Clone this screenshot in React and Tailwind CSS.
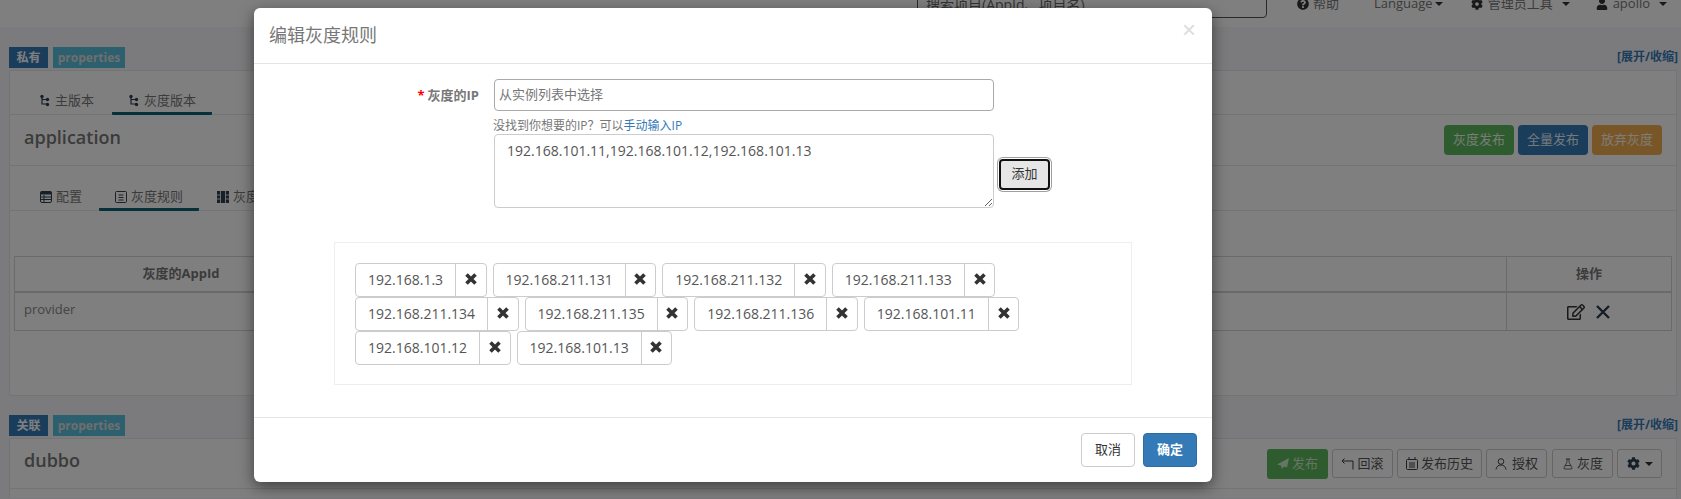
import { FaCog, FaQuestionCircle, FaUser, FaRegEdit } from "react-icons/fa";
import { FlaskConical } from "lucide-react";

const FONT = "font-['Open_Sans','Noto_Sans_CJK_SC',sans-serif]";

const ips = [
  "192.168.1.3",
  "192.168.211.131",
  "192.168.211.132",
  "192.168.211.133",
  "192.168.211.134",
  "192.168.211.135",
  "192.168.211.136",
  "192.168.101.11",
  "192.168.101.12",
  "192.168.101.13",
];

function Caret() {
  return <span className="inline-block ml-[2px] w-0 h-0 border-x-[4px] border-x-transparent border-t-[4px] border-t-[#333]" />;
}

function ForkIcon() {
  return (
    <svg width="12" height="13" viewBox="0 0 12 13" className="text-[#2f3f52]">
      <path d="M3 2v8h6M3 5.500h6" fill="none" stroke="currentColor" strokeWidth="1.200" />
      <circle cx="3" cy="2.500" r="1.700" fill="currentColor" />
      <circle cx="8.500" cy="5.500" r="1.700" fill="currentColor" />
      <circle cx="8.500" cy="10.500" r="1.700" fill="currentColor" />
    </svg>
  );
}

function TableIcon() {
  return (
    <svg width="12" height="12" viewBox="0 0 12 12" className="text-[#2f3f52]">
      <rect x="0.500" y="0.500" width="11" height="11" rx="1.500" fill="none" stroke="currentColor" />
      <rect x="0.500" y="0.500" width="11" height="3" fill="currentColor" />
      <path d="M1 6h10M1 8.500h10M4 4v7" stroke="currentColor" />
    </svg>
  );
}

function FileIcon() {
  return (
    <svg width="12" height="13" viewBox="0 0 12 13" className="text-[#3a3f47]">
      <rect x="0.500" y="1.500" width="11" height="11" rx="1" fill="none" stroke="currentColor" />
      <path d="M3.500 5h5M3.500 7.500h5M3.500 10h5M4 1.500h4" stroke="currentColor" />
    </svg>
  );
}

function GridIcon() {
  return (
    <svg width="12" height="12" viewBox="0 0 12 12" className="text-[#2f3f52]">
      <path d="M0 0h12v12H0z" fill="currentColor" />
      <path d="M3.500 0v12M8.500 0v12M0 4h3.500M8.500 4H12M0 8h3.500M8.500 8H12" stroke="#fff" strokeWidth="0.800" />
    </svg>
  );
}

function SendIcon() {
  return (
    <svg width="12" height="11" viewBox="0 0 12 11" className="text-white/70 mr-[3px]">
      <path d="M12 0 L0 6.500 L4 7.500 L5 11 L7 8.500 L10 9.500 Z" fill="currentColor" />
    </svg>
  );
}

function RollbackIcon() {
  return (
    <svg width="13" height="12" viewBox="0 0 13 12" className="text-[#2f3f52] mr-[3px]">
      <path d="M1 3h11v8.500M3.500 .5L1 3l2.500 2.500" fill="none" stroke="currentColor" />
    </svg>
  );
}

function CalendarIcon() {
  return (
    <svg width="12" height="13" viewBox="0 0 12 13" className="text-[#3a3f47] mr-[3px]">
      <rect x="0.500" y="2.500" width="11" height="10" rx="1" fill="none" stroke="currentColor" />
      <path d="M3 0v3M9 0v3M3 6h6M3 8h6M3 10h6" stroke="currentColor" />
    </svg>
  );
}

function UserIcon() {
  return (
    <svg width="12" height="12" viewBox="0 0 12 12" className="text-[#3a3f47] mr-[5px]">
      <circle cx="6" cy="3.500" r="2.800" fill="none" stroke="currentColor" />
      <path d="M1 11.500c.4-3 2.400-4.500 5-4.500s4.600 1.500 5 4.500" fill="none" stroke="currentColor" />
    </svg>
  );
}

function RemoveIcon() {
  return (
    <svg width="12" height="12" viewBox="0 0 12 12" className="text-[#333]">
      <path d="M1.500 1.500l9 9M10.500 1.500l-9 9" stroke="currentColor" strokeWidth="3.600" />
    </svg>
  );
}

function Badges({ scope }) {
  return (
    <div className="flex justify-between items-end h-[23px] -mr-[1px]">
      <div className="flex gap-[5px] h-[21px] mb-[2px] text-[12px] font-bold text-white leading-[21px]">
        <span className="w-[39px] text-center bg-[#337ab7]">{scope}</span>
        <span className="w-[72px] text-center bg-[#5bc0de] text-[#ddd]">properties</span>
      </div>
      <a className="text-[12px] font-bold text-[#337ab7] mb-[4px]">[展开/收缩]</a>
    </div>
  );
}

function Tab({ icon, label, active, className = "mr-[2px]" }) {
  return (
    <div
      className={`flex items-center gap-[4px] h-[28px] -mb-[1px] pt-[2px] px-[16px] text-[13px] text-[#777] border-b-[3px] ${className} ${
        active ? "border-[#0d6275] rounded-b-[1px]" : "border-transparent"
      }`}
    >
      {icon}
      <span>{label}</span>
    </div>
  );
}

function ActionBtn({ icon, label, className = "w-[61px]" }) {
  return (
    <button className={`flex items-center justify-center h-[29px] border border-[#ccc] rounded-[3px] bg-white text-[13px] text-[#555] ${className}`}>
      {icon}
      {label}
    </button>
  );
}

function Background() {
  return (
    <div className="w-full h-full bg-[#f7f7fa]">
      {/* navbar, cut off at the top of the window */}
      <div className="h-[27px] bg-white overflow-hidden">
        <div className="flex items-center h-[28px] -mt-[10px] text-[13px] text-[#777]">
          <div className="relative w-[350px] h-[28px] ml-[917px] border border-[#555] rounded-[4px] pl-[8px] leading-[27px] text-[14px] text-[#666]">
            搜索项目(AppId、项目名)
          </div>
          <span className="flex items-center gap-[4px] ml-[30px]"><FaQuestionCircle className="text-[12px] text-[#333]" />帮助</span>
          <span className="flex items-center ml-[35px]">Language<Caret /></span>
          <span className="flex items-center gap-[5px] ml-[28px]"><FaCog className="text-[12px] text-[#333]" />管理员工具<span className="ml-[2px] flex"><Caret /></span></span>
          <span className="flex items-center gap-[5px] ml-[26px]"><FaUser className="text-[12px] text-[#333]" />apollo<span className="ml-[2px] flex"><Caret /></span></span>
        </div>
      </div>

      <div className="pl-[9px] pr-[4px] pt-[20px]">
        <Badges scope="私有" />
        <div className="h-[326px] bg-white border border-[#e8e8e8]">
          <div className="flex items-end h-[44px] pl-[13px] border-b border-[#e8e8e8]">
            <Tab icon={<ForkIcon />} label="主版本" />
            <Tab icon={<ForkIcon />} label="灰度版本" active />
          </div>
          <div className="flex items-center justify-between h-[51px] pl-[14px] pr-[14px] border-b border-[#e8e8e8]">
            <h3 className="text-[18px] font-semibold text-[#777] -mt-[6px]">application</h3>
            <div className="flex gap-[4px] mt-[-1px]">
              <button className="w-[70px] h-[30px] bg-[#5cb85c] rounded-[4px] text-[13px] text-white/90">灰度发布</button>
              <button className="w-[70px] h-[30px] bg-[#337ab7] rounded-[4px] text-[13px] text-white/90">全量发布</button>
              <button className="w-[70px] h-[30px] bg-[#f0ad4e] rounded-[4px] text-[13px] text-white/90">放弃灰度</button>
            </div>
          </div>
          <div className="flex items-end h-[45px] pl-[14px] border-b border-[#e8e8e8]">
            <Tab icon={<TableIcon />} label="配置" className="mr-[1px]" />
            <Tab icon={<FileIcon />} label="灰度规则" active />
            <Tab icon={<GridIcon />} label="灰度实例列表" />
          </div>
          <div className="mx-[4px] mt-[45px] border border-[#d4d4d4] text-[13px] text-[#888]">
            <div className="grid grid-cols-[332px_1fr_165px] h-[36px] border-b-2 border-[#d4d4d4] font-bold text-[#777] items-center">
              <span className="text-center">灰度的AppId</span>
              <span />
              <span className="flex items-center justify-center h-full border-l border-[#d4d4d4]">操作</span>
            </div>
            <div className="grid grid-cols-[332px_1fr_165px] h-[37px] items-center">
              <span className="pl-[9px] pb-[3px]">provider</span>
              <span />
              <span className="flex items-center justify-center gap-[11px] h-full pr-[2px] border-l border-[#d4d4d4]">
                <FaRegEdit className="text-[18px] text-[#333]" />
                <svg width="14" height="14" viewBox="0 0 14 14" className="text-[#2c3a4a]">
                  <path d="M1 1l12 12M13 1L1 13" stroke="currentColor" strokeWidth="2.400" />
                </svg>
              </span>
            </div>
          </div>
        </div>
      </div>

      <div className="pl-[9px] pr-[4px] pt-[19px]">
        <Badges scope="关联" />
        <div className="h-[60px] bg-white border-t border-x border-[#e8e8e8]">
          <div className="flex items-center justify-between h-[50px] pl-[14px] pr-[14px] border-b border-[#e8e8e8]">
            <h3 className="text-[18px] font-semibold text-[#777] -mt-[6px]">dubbo</h3>
            <div className="flex gap-[4px] items-center">
              <button className="flex items-center justify-center w-[61px] h-[30px] bg-[#5cb85c] rounded-[3px] text-[13px] text-white/70"><SendIcon />发布</button>
              <ActionBtn icon={<RollbackIcon />} label="回滚" />
              <ActionBtn icon={<CalendarIcon />} label="发布历史" className="w-[85px]" />
              <ActionBtn icon={<UserIcon />} label="授权" />
              <ActionBtn icon={<FlaskConical size={12} strokeWidth={1.5} className="mr-[3px] text-[#3a3f47]" />} label="灰度" className="w-[61px] ml-[1px]" />
              <ActionBtn icon={<FaCog className="text-[13px] text-[#2f3f52] mr-[3px]" />} label={<Caret />} className="w-[45px]" />
            </div>
          </div>
        </div>
      </div>
    </div>
  );
}

function Chip({ ip }) {
  return (
    <div className="flex h-[34px] border border-[#ccc] rounded-[4px] text-[14px] text-[#555] leading-[32px]">
      <span className="px-[12px] border-r border-[#ccc]">{ip}</span>
      <span className="flex items-center justify-center w-[29.5px] pb-[2px]"><RemoveIcon /></span>
    </div>
  );
}

export default function App() {
  return (
    <div className={`relative w-[1681px] h-[499px] overflow-hidden ${FONT}`}>
      <Background />
      <div className="absolute inset-0 bg-black/50" />

      {/* modal */}
      <div className="absolute left-[254px] top-[8px] w-[958px] h-[474px] bg-white rounded-[6px] shadow-[0_5px_15px_rgba(0,0,0,0.5)] flex flex-col">
        <div className="flex items-start justify-between h-[56px] pl-[15px] pr-[15px] border-b border-[#e5e5e5]">
          <h4 className="text-[18px] leading-[54px] text-[#777]">编辑灰度规则</h4>
          <span className="text-[24px] leading-[44px] text-[#ddd] font-['Liberation_Sans',sans-serif] mr-[1px]">×</span>
        </div>

        <div className="flex-1">
          <div className="flex pt-[15px]">
            <label className="w-[225px] pt-[7px] text-right text-[13px] font-bold text-[#777] leading-[18px]">
              <span className="text-[#f00] mr-[3px]">*</span>灰度的IP
            </label>
            <div className="ml-[15px]">
              <input
                readOnly
                placeholder="从实例列表中选择"
                className="block w-[500px] h-[32px] pl-[4px] pb-[3px] border border-[#a9a9a9] rounded-[4px] text-[13px] placeholder:text-[#777] outline-none"
              />
              <p className="mt-[7px] -ml-[1px] h-[16px] text-[12px] leading-[16px] text-[#777]">
                没找到你想要的IP？可以<a className="text-[#337ab7]">手动输入IP</a>
              </p>
              <div className="flex items-center">
                <textarea
                  readOnly
                  value="192.168.101.11,192.168.101.12,192.168.101.13"
                  className="block w-[500px] h-[74px] px-[12px] py-[6px] border border-[#ccc] rounded-[4px] text-[14px] leading-[20px] text-[#555] resize outline-none"
                />
                <button className="w-[51px] h-[31px] ml-[5px] mt-[6px] border-2 border-[#111] rounded-[4px] bg-[#e6e6e6] text-[13px] text-[#333] shadow-[0_0_0_1px_#fff,0_0_0_2px_#a0a0a0]">
                  添加
                </button>
              </div>
            </div>
          </div>

          <div className="flex flex-wrap content-start gap-x-[6px] ml-[80px] mt-[34px] w-[798px] h-[143px] px-[20px] pt-[20px] border border-[#eee]">
            {ips.map((ip) => (
              <Chip key={ip} ip={ip} />
            ))}
          </div>
        </div>

        <div className="flex justify-end gap-[8px] h-[65px] pt-[15px] pr-[15px] border-t border-[#e5e5e5]">
          <button className="w-[54px] h-[34px] border border-[#ccc] rounded-[4px] bg-white text-[13px] text-[#333]">取消</button>
          <button className="w-[54px] h-[34px] border border-[#2e6da4] rounded-[4px] bg-[#337ab7] text-[13px] font-bold text-white">确定</button>
        </div>
      </div>
    </div>
  );
}
